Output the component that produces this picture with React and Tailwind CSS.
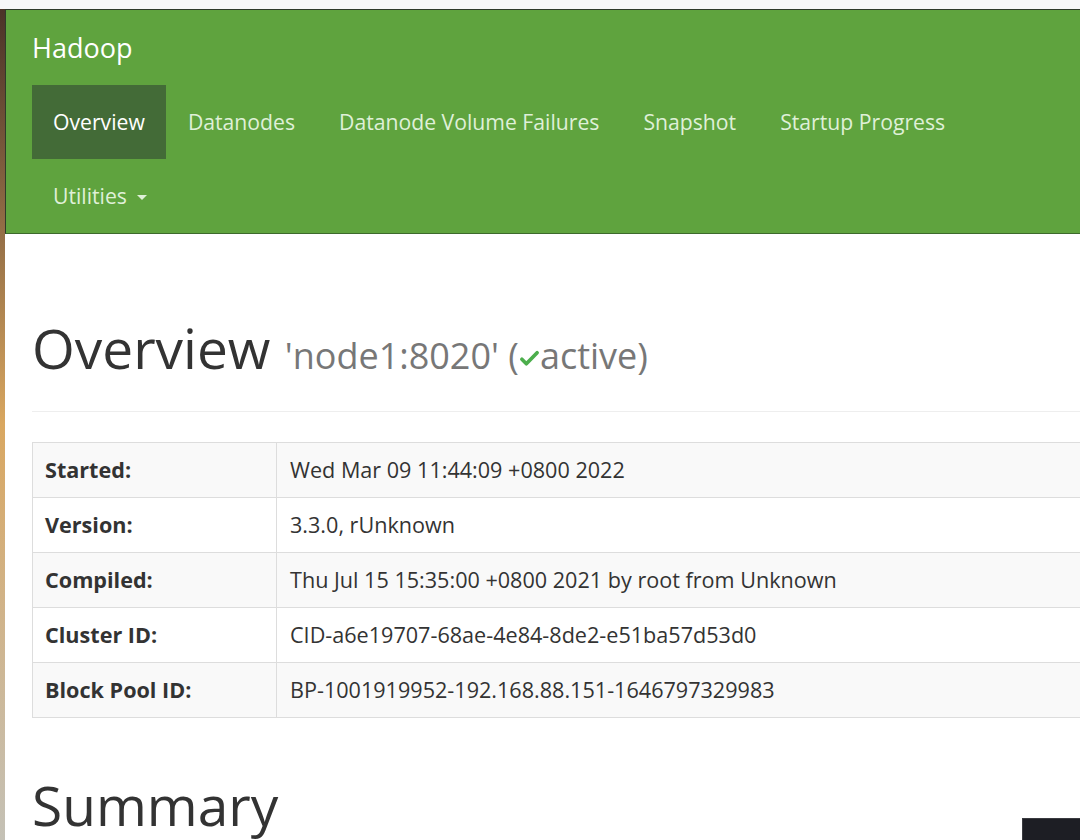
import React from "react";

const navItems = [
    { label: "Overview", active: true },
    { label: "Datanodes" },
    { label: "Datanode Volume Failures" },
    { label: "Snapshot" },
    { label: "Startup Progress" },
];

const rows = [
    ["Started:", "Wed Mar 09 11:44:09 +0800 2022"],
    ["Version:", "3.3.0, rUnknown"],
    ["Compiled:", "Thu Jul 15 15:35:00 +0800 2021 by root from Unknown"],
    ["Cluster ID:", "CID-a6e19707-68ae-4e84-8de2-e51ba57d53d0"],
    ["Block Pool ID:", "BP-1001919952-192.168.88.151-1646797329983"],
];

function CheckIcon() {
    return (
        <svg className="inline-block w-[21px] h-[21px] mb-[2px]" viewBox="0 0 16 16">
            <path
                d="M2.2 8.6 L5.6 12 L13.8 3.6"
                fill="none"
                stroke="#4cae4c"
                strokeWidth="2.8"
                strokeLinecap="round"
                strokeLinejoin="round"
            />
        </svg>
    );
}

function Navbar() {
    return (
        <nav className="bg-[#5fa33e] border-t border-l border-t-[#2f3a2a] border-l-[#2f3a2a] border-b border-b-[#3d6a2c] h-[225px] flex flex-col text-[21.2px]">
            <div className="h-[75px] flex items-center px-[26px]">
                <span className="text-[27px] text-white">Hadoop</span>
            </div>
            <ul className="flex px-[26px] h-[74px]">
                {navItems.map((item) => (
                    <li
                        key={item.label}
                        className={
                            item.active
                                ? "flex items-center px-[21px] bg-[#436b37] text-white"
                                : "flex items-center px-[22px] text-[#dff0d8]"
                        }
                    >
                        {item.label}
                    </li>
                ))}
            </ul>
            <ul className="flex px-[26px] h-[74px]">
                <li className="flex items-center gap-[10px] px-[21px] text-[#dff0d8]">
                    Utilities
                    <span className="w-0 h-0 border-l-[5px] border-r-[5px] border-t-[5px] border-l-transparent border-r-transparent border-t-[#dff0d8] mt-[2px]" />
                </li>
            </ul>
        </nav>
    );
}

export default function App() {
    return (
        <div
            className="relative w-[1080px] h-[840px] overflow-hidden bg-white text-[#333] text-[21.6px] leading-[30px]"
            style={{ fontFamily: '"Open Sans", "Noto Sans", sans-serif' }}
        >
            <div className="h-[9px] bg-[#f7f7f8]" />
            <div className="flex h-[831px]">
                <div className="w-[5px] shrink-0 bg-gradient-to-b from-[#4b3328] via-[#d9a760] to-[#c4c1b6]" />
                <div className="flex-1 min-w-0 flex flex-col">
                    <Navbar />
                    <div className="pl-[27px]">
                        <div className="mt-[84px] mb-[30px] pb-[11px] border-b border-[#eee]">
                            <h1 className="mt-[30px] mb-[15px] text-[55px] leading-[59px] whitespace-nowrap">
                                Overview{" "}
                                <small className="text-[36px] text-[#777]">
                                    'node1:8020' (<CheckIcon />active)
                                </small>
                            </h1>
                        </div>
                        <table className="w-[1200px] border-collapse border border-[#ddd]">
                            <tbody>
                                {rows.map(([label, value], i) => (
                                    <tr key={label} className={i % 2 === 0 ? "bg-[#f9f9f9]" : "bg-white"}>
                                        <th className="w-[244px] text-left font-bold px-[12px] py-[12px] border border-[#ddd] whitespace-nowrap">
                                            {label}
                                        </th>
                                        <td className="px-[13px] py-[12px] border border-[#ddd] whitespace-nowrap">
                                            {value}
                                        </td>
                                    </tr>
                                ))}
                            </tbody>
                        </table>
                        <h1 className="mt-[57px] text-[55px] leading-[59px]">Summary</h1>
                    </div>
                </div>
            </div>
            <div className="absolute right-0 bottom-0 w-[58px] h-[22px] bg-[#1d1e24] border-t border-l border-[#3a3b40]" />
        </div>
    );
}
